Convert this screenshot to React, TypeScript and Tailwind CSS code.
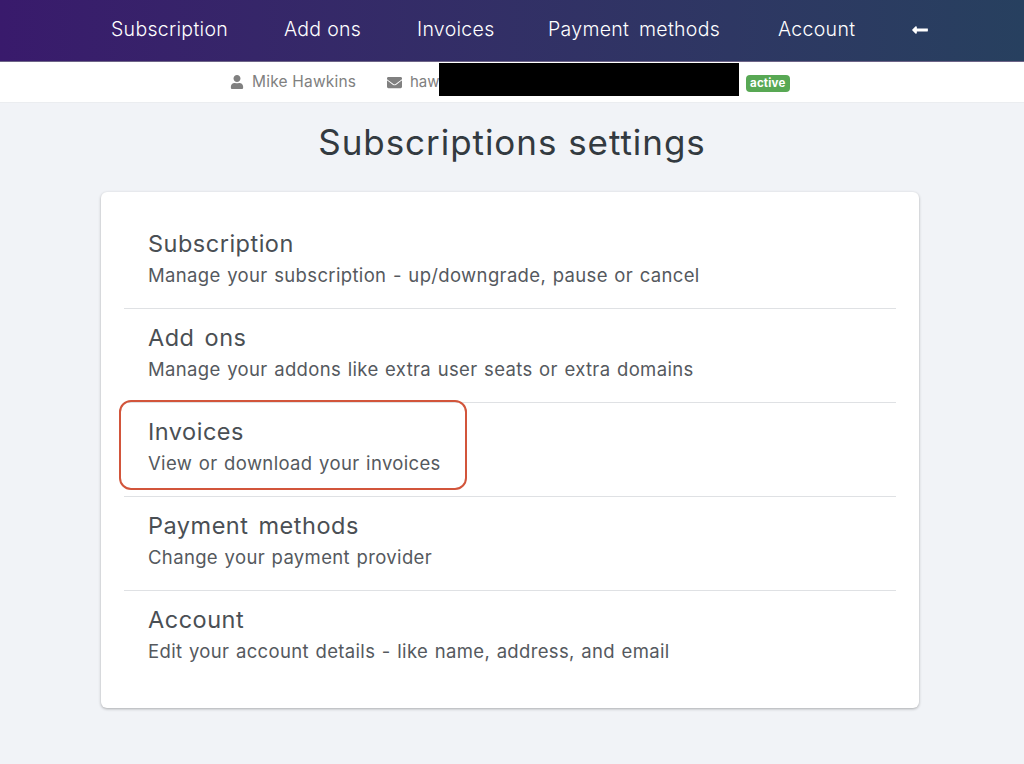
import React from 'react';
import { FaUser, FaEnvelope, FaLongArrowAltLeft } from 'react-icons/fa';

const navItems = [
  { label: 'Subscription', width: 'w-[117px]' },
  { label: 'Add ons', width: 'w-[77px]' },
  { label: 'Invoices', width: 'w-[75px]' },
  { label: 'Payment methods', width: 'w-[174px] [word-spacing:4px]' },
  { label: 'Account', width: 'w-[78px]' },
];

const settings = [
  { title: 'Subscription', text: 'Manage your subscription - up/downgrade, pause or cancel' },
  { title: 'Add ons', text: 'Manage your addons like extra user seats or extra domains' },
  { title: 'Invoices', text: 'View or download your invoices', marked: true },
  { title: 'Payment methods', text: 'Change your payment provider' },
  { title: 'Account', text: 'Edit your account details - like name, address, and email' },
];

const App: React.FC = () => {
  return (
    <div className="h-[764px] overflow-hidden bg-[#f1f3f7] font-['Inter','Open_Sans',sans-serif]">
      {/* Top nav */}
      <div className="flex h-[62px] items-center gap-[56px] border-b border-[#6d6487] bg-gradient-to-r from-[#391a6c] to-[#27405f] pb-[2px] pl-[111px] text-[19.5px] font-light tracking-[0.3px] whitespace-nowrap text-white">
        {navItems.map((item) => (
          <span key={item.label} className={item.width}>
            {item.label}
          </span>
        ))}
        <FaLongArrowAltLeft className="ml-[-1px] h-[18px] w-[18px]" />
      </div>

      {/* User strip */}
      <div className="flex h-[41px] items-center border-b border-[#ebedf0] bg-white pl-[230px] text-[15.5px] tracking-[0.2px] text-[#808080]">
        <FaUser className="h-[14px] w-[14px]" />
        <span className="ml-[8px] w-[135px]">Mike Hawkins</span>
        <FaEnvelope className="h-[15px] w-[15px]" />
        <span className="ml-[8px] w-[29px] text-[15px] tracking-normal">haw</span>
        <div className="mt-[1px] h-[33px] w-[300px] self-start bg-black" />
        <span className="mt-[2px] ml-[7px] rounded-[4px] bg-[#58a854] px-[4px] text-[11.5px] leading-[17px] font-bold text-white">
          active
        </span>
      </div>

      <h1 className="mt-[17px] text-center text-[35px] leading-[44px] tracking-[0.95px] text-[#333a40]">
        Subscriptions settings
      </h1>

      {/* Settings card */}
      <div className="mt-[28px] ml-[101px] w-[818px] rounded-[6px] bg-white px-[23px] pt-[23px] pb-[23px] shadow-[0_1px_3px_rgba(0,0,0,0.3)]">
        {settings.map((row, i) => (
          <div
            key={row.title}
            className={`relative h-[94px] px-[24px] pt-[14px] ${i < settings.length - 1 ? 'border-b border-[#dfe1e4]' : ''}`}
          >
            <div className="text-[23.5px] leading-[30px] tracking-[0.5px] text-[#4a4f54] [word-spacing:3px]">
              {row.title}
            </div>
            <div className="mt-[2px] text-[18.5px] leading-[28px] tracking-[0.35px] text-[#55595e] [word-spacing:1px]">
              {row.text}
            </div>
            {row.marked && (
              <div className="absolute top-[-3px] left-[-5px] h-[90px] w-[348px] rounded-[12px] border-2 border-[#d2553b]" />
            )}
          </div>
        ))}
      </div>
    </div>
  );
};

export default App;
